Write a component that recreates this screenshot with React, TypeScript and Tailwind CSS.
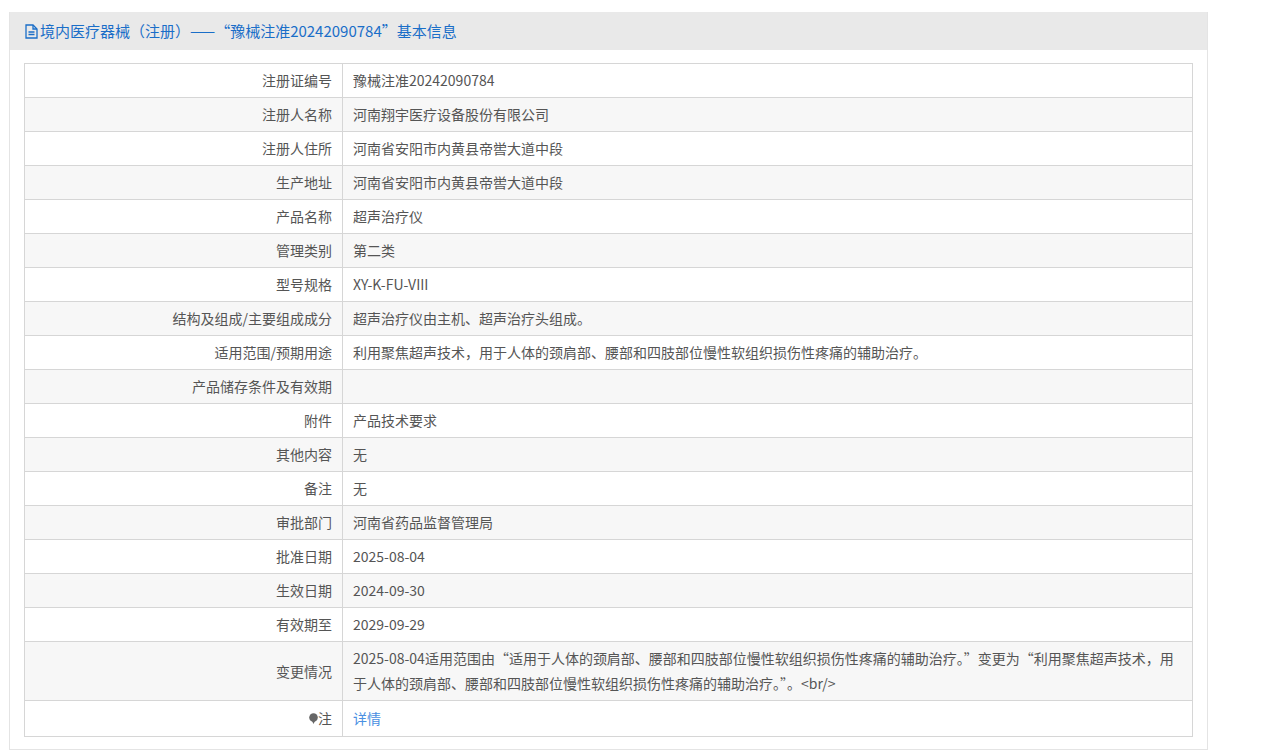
import React from "react"

const rows: [string, string][] = [
  ["注册证编号", "豫械注准20242090784"],
  ["注册人名称", "河南翔宇医疗设备股份有限公司"],
  ["注册人住所", "河南省安阳市内黄县帝喾大道中段"],
  ["生产地址", "河南省安阳市内黄县帝喾大道中段"],
  ["产品名称", "超声治疗仪"],
  ["管理类别", "第二类"],
  ["型号规格", "XY-K-FU-VIII"],
  ["结构及组成/主要组成成分", "超声治疗仪由主机、超声治疗头组成。"],
  ["适用范围/预期用途", "利用聚焦超声技术，用于人体的颈肩部、腰部和四肢部位慢性软组织损伤性疼痛的辅助治疗。"],
  ["产品储存条件及有效期", ""],
  ["附件", "产品技术要求"],
  ["其他内容", "无"],
  ["备注", "无"],
  ["审批部门", "河南省药品监督管理局"],
  ["批准日期", "2025-08-04"],
  ["生效日期", "2024-09-30"],
  ["有效期至", "2029-09-29"],
  ["变更情况", "2025-08-04适用范围由“适用于人体的颈肩部、腰部和四肢部位慢性软组织损伤性疼痛的辅助治疗。”变更为“利用聚焦超声技术，用于人体的颈肩部、腰部和四肢部位慢性软组织损伤性疼痛的辅助治疗。”。<br/>"],
]

export default function App() {
  return (
    <div className="bg-white min-h-[756px] pt-3 pl-[9px]" style={{ fontFamily: '"Noto Sans CJK SC", sans-serif' }}>
      <div className="w-[1199px] border border-[#e4e4e4] border-t-0">
        <div className="h-[38px] bg-[#e9e9e9] flex items-center pl-[15px] text-[15px] text-[#1a6ec8]">
          <svg width="13" height="15" viewBox="0 0 13 15" className="mr-[2px]" fill="none" stroke="#1a6ec8" strokeWidth="1.3">
            <path d="M1 1h7l4 4v9H1z" />
            <path d="M8 1v4h4" />
            <path d="M3.5 8h6M3.5 10.5h6" />
          </svg>
          境内医疗器械（注册）——“豫械注准20242090784”基本信息
        </div>
        <div className="px-[14px] pt-[13px] pb-[12px]">
          <div className="border border-[#d6d6d6] text-[14px] text-[#555]">
            {rows.map(([k, v], i) => (
              <div key={k} className={`flex border-b border-[#d6d6d6] ${i % 2 ? "bg-[#f7f7f7]" : "bg-white"}`}>
                <div className="w-[318px] shrink-0 border-r border-[#d6d6d6] flex items-center justify-end pr-[10px] min-h-[33px]">{k}</div>
                <div className="flex-1 flex items-center px-[10px] py-[4px] leading-[25px] min-h-[33px]">{v}</div>
              </div>
            ))}
            <div className="flex bg-white">
              <div className="w-[318px] shrink-0 border-r border-[#d6d6d6] flex items-center justify-end pr-[10px] h-[35px]">
                <svg width="9" height="12" viewBox="0 0 9 12"><ellipse cx="4.5" cy="4.5" rx="4.3" ry="4.3" fill="#666" /><path d="M3 8h3l-1.5 3z" fill="#666" /></svg>
                注
              </div>
              <div className="flex-1 flex items-center px-[10px] text-[#4a90e2]">详情</div>
            </div>
          </div>
        </div>
      </div>
    </div>
  )
}
